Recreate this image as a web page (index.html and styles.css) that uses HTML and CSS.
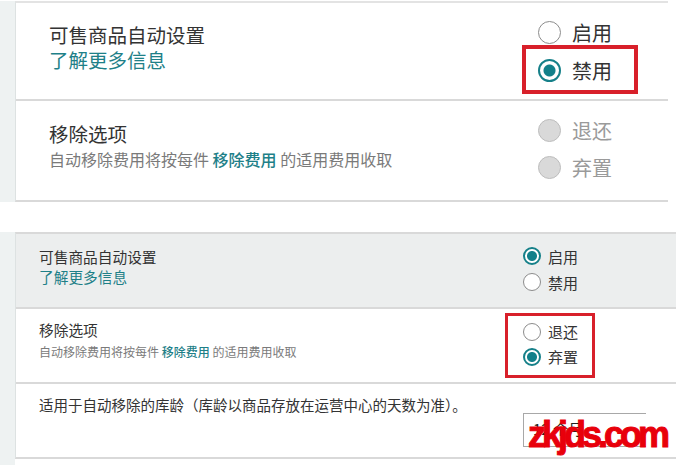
FILE: index.html
```html
<!DOCTYPE html>
<html lang="zh-CN">
<head>
<meta charset="utf-8">
<title>可售商品自动设置</title>
<link rel="stylesheet" href="styles.css">
</head>
<body>
<section class="shot lg">
  <div class="panel">
    <div class="row r1">
      <div class="info">
        <div class="title">可售商品自动设置</div>
        <div class="link">了解更多信息</div>
      </div>
      <div class="options">
        <div class="opt"><span class="radio"></span><span>启用</span></div>
        <div class="opt mark"><span class="radio on"></span><span>禁用</span></div>
      </div>
    </div>
    <div class="row r2">
      <div class="info">
        <div class="title">移除选项</div>
        <div class="desc">自动移除费用将按每件 <span class="link-in">移除费用</span> 的适用费用收取</div>
      </div>
      <div class="options">
        <div class="opt dis"><span class="radio off"></span><span>退还</span></div>
        <div class="opt dis"><span class="radio off"></span><span>弃置</span></div>
      </div>
    </div>
  </div>
</section>

<section class="shot sm">
  <div class="panel">
    <div class="row r1 grey">
      <div class="info">
        <div class="title">可售商品自动设置</div>
        <div class="link">了解更多信息</div>
      </div>
      <div class="options">
        <div class="opt"><span class="radio on"></span><span>启用</span></div>
        <div class="opt"><span class="radio"></span><span>禁用</span></div>
      </div>
    </div>
    <div class="row r2">
      <div class="info">
        <div class="title">移除选项</div>
        <div class="desc">自动移除费用将按每件 <span class="link-in">移除费用</span> 的适用费用收取</div>
      </div>
      <div class="options">
        <div class="group mark">
          <div class="opt"><span class="radio"></span><span>退还</span></div>
          <div class="opt"><span class="radio on"></span><span>弃置</span></div>
        </div>
      </div>
    </div>
    <div class="row r3">
      <div class="info">
        <div class="title">适用于自动移除的库龄（库龄以商品存放在运营中心的天数为准）。</div>
      </div>
      <div class="options">
        <div class="select">12 个月</div>
      </div>
    </div>
  </div>
</section>

<div class="watermark">zkjds.com</div>
</body>
</html>
```

FILE: styles.css
```css
html, body {
  margin: 0;
  padding: 0;
}
body {
  width: 676px;
  height: 465px;
  overflow: hidden;
  position: relative;
  background: #fff;
  color: #333;
  font-family: "Noto Sans CJK SC", "Noto Sans", sans-serif;
}

.shot {
  display: flex;
  flex-direction: column;
  padding-left: 15px;
  background: linear-gradient(to right, #eef2f2 15px, #ffffff 15px);
}
.panel {
  background: #fff;
  border-left: 1px solid #dde2e2;
  border-bottom: 2px solid #d9d9d9;
}
.row {
  display: grid;
}
.row + .row {
  border-top: 2px solid #d9d9d9;
}

.radio {
  flex: none;
  box-sizing: border-box;
  border-radius: 50%;
  background: #fff;
  border: 1px solid #8c8c8c;
}
.radio.on {
  border: 2px solid #168089;
}
.radio.off {
  background: #d9d9d9;
  border-color: #bdbdbd;
}
.opt {
  display: flex;
  align-items: center;
  width: fit-content;
}
.opt.dis {
  color: #9a9a9a;
}
.mark {
  position: relative;
}
.mark::after {
  content: "";
  position: absolute;
  border: 4px solid #d8202a;
}

.link {
  color: #1e8088;
}
.link-in {
  color: #1e8088;
  font-weight: 500;
}
.desc {
  color: #7a7a7a;
}

/* large (zoomed) screenshot */
.lg {
  margin-top: 1px;
  padding-right: 8px;
}
.lg .panel {
  border-top: 2px solid #e3e3e3;
}
.lg .row {
  grid-template-columns: 1fr 130px;
}
.lg .r1 { height: 96px; }
.lg .r2 { height: 99px; }
.lg .info {
  padding: 19px 0 0 33px;
}
.lg .r2 .info {
  padding-top: 20px;
}
.lg .title,
.lg .link {
  font-size: 19.5px;
  line-height: 25px;
}
.lg .desc {
  font-size: 16px;
  line-height: 22px;
  margin-top: 2px;
}
.lg .options {
  padding-top: 10px;
}
.lg .r2 .options {
  padding-top: 11px;
}
.lg .opt {
  height: 38px;
  gap: 11px;
  font-size: 20px;
}
.lg .r2 .opt {
  height: 37px;
}
.lg .radio {
  width: 23px;
  height: 23px;
}
.lg .radio.on {
  border-width: 2.5px;
  background: radial-gradient(circle, #12808a 0 5.5px, #fff 6.5px);
}
.lg .mark::after {
  top: -6px;
  bottom: -5px;
  left: -16px;
  right: -26px;
}

/* small (original) screenshot */
.sm {
  margin-top: 30px;
  padding-bottom: 8px;
}
.sm .panel {
  border-top: 2px solid #d9d9d9;
}
.sm .row {
  grid-template-columns: 1fr 153px;
  height: 73px;
}
.sm .grey {
  background: #eceeee;
}
.sm .info {
  padding: 13px 0 0 23px;
}
.sm .r2 .info,
.sm .r3 .info {
  padding-top: 11px;
}
.sm .title,
.sm .link {
  font-size: 14.7px;
  line-height: 20px;
}
.sm .r3 .title {
  font-size: 14.5px;
}
.sm .desc {
  font-size: 12px;
  line-height: 18px;
  margin-top: 3px;
}
.sm .options {
  padding-top: 9px;
}
.sm .r2 .options {
  padding-top: 10px;
}
.sm .opt {
  height: 26px;
  gap: 7px;
  font-size: 15px;
}
.sm .r2 .opt {
  height: 25px;
}
.sm .radio {
  width: 18px;
  height: 18px;
}
.sm .radio.on {
  border-width: 2px;
  background: radial-gradient(circle, #12808a 0 4.5px, #fff 5.5px);
}
.sm .group {
  width: fit-content;
}
.sm .mark::after {
  border-width: 3px;
  top: -6px;
  bottom: -9px;
  left: -18px;
  right: -17px;
}
.select {
  margin-top: 20px;
  width: 123px;
  height: 34px;
  box-sizing: border-box;
  border: 1px solid #a8a8a8;
  border-right: none;
  padding: 5px 0 0 9px;
  font-size: 15px;
  line-height: 20px;
  color: #222;
}

.watermark {
  position: absolute;
  left: 528px;
  top: 418px;
  font-family: "Liberation Sans", Arial, sans-serif;
  font-weight: bold;
  font-size: 36px;
  line-height: 34px;
  letter-spacing: -4px;
  color: #e8000b;
  -webkit-text-stroke: 1px #e8000b;
}
```
